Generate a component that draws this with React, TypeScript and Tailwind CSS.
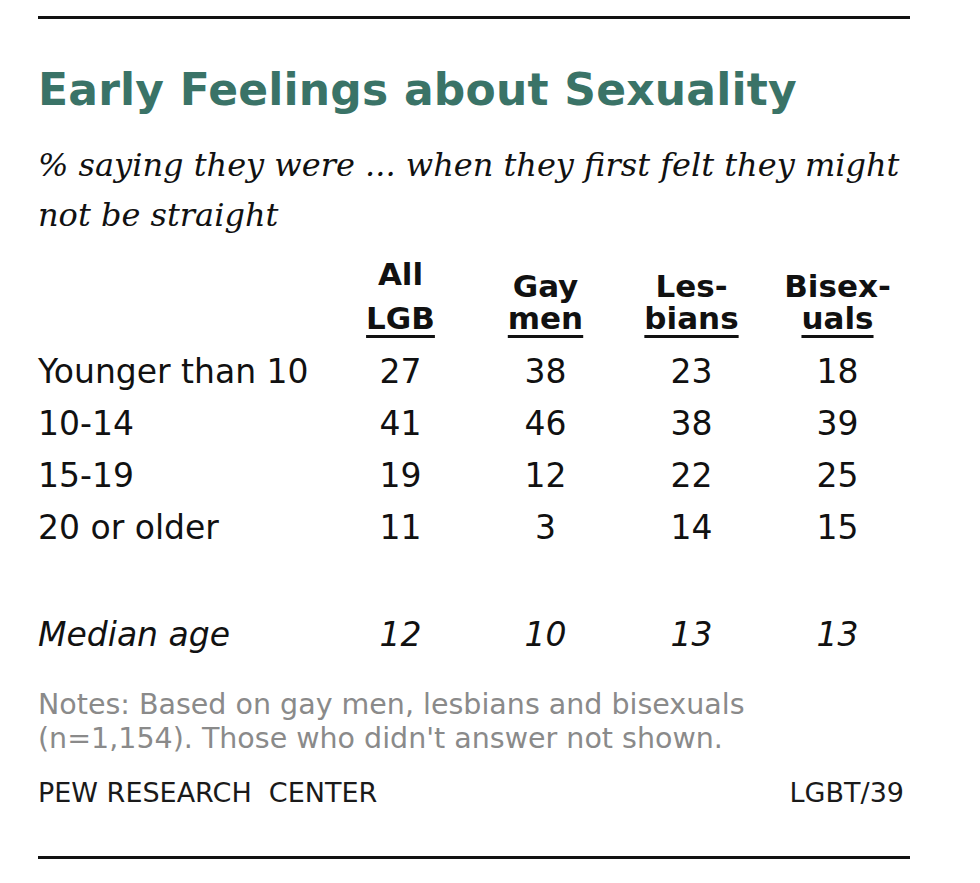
import React from 'react';

const sans = { fontFamily: '"DejaVu Sans", Verdana, sans-serif' };
const serif = { fontFamily: '"DejaVu Serif", Georgia, serif' };

const rows: [string, string[]][] = [
  ['Younger than 10', ['27', '38', '23', '18']],
  ['10-14', ['41', '46', '38', '39']],
  ['15-19', ['19', '12', '22', '25']],
  ['20 or older', ['11', '3', '14', '15']],
];

const median = ['12', '10', '13', '13'];

function HeaderCell({ top, bottom, gap }: { top: string; bottom: string; gap?: boolean }) {
  return (
    <div className="flex flex-col items-center justify-end font-bold text-[31px] text-[#111]">
      <span className={gap ? 'leading-[32px] mb-[12px]' : 'leading-[32px]'}>{top}</span>
      <span className="leading-[32px] underline decoration-[3px] underline-offset-[6px]">{bottom}</span>
    </div>
  );
}

export default function App() {
  return (
    <div className="w-[980px] h-[883px] bg-white px-[38px] pt-4 text-[#111]" style={sans}>
      <div className="w-[872px] border-t-[3px] border-[#111]" />

      {/* Title */}
      <h1 className="mt-[41px] text-[44px] leading-[60px] font-bold text-[#3a7367] tracking-[0.2px]">
        Early Feelings about Sexuality
      </h1>
      <p className="mt-[20px] text-[32px] leading-[50px] italic w-[872px]" style={serif}>
        % saying they were ... when they first felt they might not be straight
      </p>

      {/* Table */}
      <div className="mt-[18px] grid grid-cols-[290px_145px_145px_147px_145px]">
        <div />
        <HeaderCell top="All" bottom="LGB" gap />
        <HeaderCell top="Gay" bottom="men" />
        <HeaderCell top="Les-" bottom="bians" />
        <HeaderCell top="Bisex-" bottom="uals" />
      </div>

      <div className="mt-[12px] flex flex-col text-[33px]">
        {rows.map(([label, vals]) => (
          <div key={label} className="grid grid-cols-[290px_145px_145px_147px_145px] h-[52px] items-center">
            <span className="whitespace-nowrap">{label}</span>
            {vals.map((v, i) => (
              <span key={i} className="text-center">{v}</span>
            ))}
          </div>
        ))}
        <div className="grid grid-cols-[290px_145px_145px_147px_145px] h-[52px] items-center italic mt-[55px]">
          <span>Median age</span>
          {median.map((v, i) => (
            <span key={i} className="text-center">{v}</span>
          ))}
        </div>
      </div>

      {/* Notes */}
      <p className="mt-[27px] text-[28.5px] leading-[34px] text-[#8a8a8a] w-[760px]">
        Notes: Based on gay men, lesbians and bisexuals (n=1,154). Those who didn't answer not shown.
      </p>

      <div className="mt-[20px] w-[866px] flex justify-between text-[27px] leading-[34px] text-[#1a1a1a]">
        <span className="whitespace-pre">PEW RESEARCH  CENTER</span>
        <span>LGBT/39</span>
      </div>

      <div className="mt-[46px] w-[872px] border-t-[3px] border-[#111]" />
    </div>
  );
}
